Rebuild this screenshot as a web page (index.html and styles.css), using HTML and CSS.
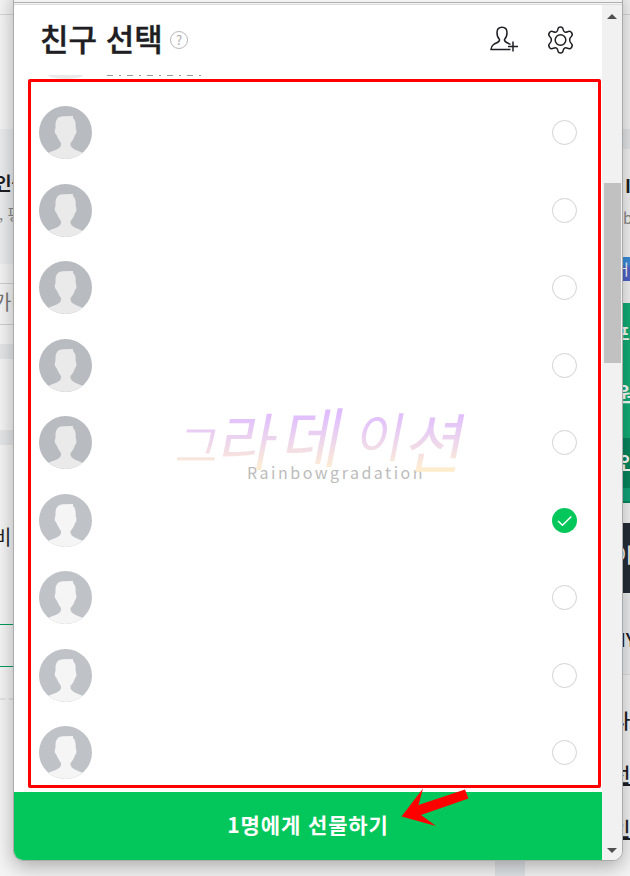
FILE: index.html
```html
<!DOCTYPE html>
<html lang="ko">
<head>
    <meta charset="UTF-8">
    <meta name="viewport" content="width=device-width, initial-scale=1.0">
    <title>친구 선택</title>
    <link rel="stylesheet" href="styles.css">
</head>
<body>
    <svg width="0" height="0" class="defs">
        <symbol id="person" viewBox="0 0 53 53">
            <path d="M9.5 47C14 44.500 21.500 43.500 22 39V37C20 34.500 18.500 31 17.500 29Q14.500 26 16.500 22V18C17 12.500 20 10.500 24 10.300L34 10V12Q37 14 36.700 22Q38.500 27 36 29C35 32 33.500 35 31.500 37V39C32.500 43.500 39 44.500 43.500 47Q36 53 26.500 53Q17 53 9.500 47Z" fill="currentColor"/>
        </symbol>
    </svg>

    <!-- page behind the popup -->
    <div class="page">
        <div class="side left">
            <div class="seg top"></div>
            <div class="seg blank"></div>
            <div class="seg notice">
                <b class="name">인증</b>
                <span class="desc">, 평</span>
            </div>
            <div class="seg gap"></div>
            <div class="seg search">가나</div>
            <div class="seg gap2"></div>
            <div class="seg bar"></div>
            <div class="seg card"></div>
            <div class="seg bar"></div>
            <div class="seg price">비</div>
            <div class="seg green-box"></div>
            <div class="seg dashed"></div>
        </div>
        <div class="side right">
            <div class="seg top"></div>
            <div class="seg blank"></div>
            <div class="seg bar tall"></div>
            <div class="seg info">
                <b class="name">I</b>
                <span class="desc">b</span>
            </div>
            <div class="seg badge">버</div>
            <div class="seg gap3"></div>
            <div class="seg shop">
                <div class="shop-name">포</div>
                <div class="shop-name second">원</div>
            </div>
            <div class="seg shop-dark">인</div>
            <div class="seg shop-end"></div>
            <div class="seg gap4"></div>
            <div class="seg black">이</div>
            <div class="seg my">IY</div>
            <div class="seg links">
                <span>나</span>
                <u>선</u>
                <u>인</u>
            </div>
        </div>
        <div class="page-strip"></div>
    </div>

    <div class="popup">
        <div class="titlebar"></div>
        <div class="popup-body">
            <div class="main">
                <div class="header">
                    <h1>친구 선택</h1>
                    <span class="help">?</span>
                    <svg class="add-icon" width="29" height="27" viewBox="0 0 29 27" fill="none" stroke="#1e1e23" stroke-width="1.500">
                        <path d="M20.500 18.500C17.500 16.500 14 16.500 14.500 13.500C16 12 17 10 17 6.500C17 3 15 1.200 12 1.200S7 3 7 6.500C7 10 8 12 9.500 13.500C10 16.500 6.500 16.500 3.500 18.500C1.500 20 1 21.500 1 23.500H20.500"/>
                        <path d="M18 20.500H28M23 15.500V25.500"/>
                    </svg>
                    <svg class="gear-icon" width="27" height="28" viewBox="0 0 27 28" fill="none" stroke="#1e1e23" stroke-width="1.500">
                        <path d="M11 3Q11.300 1 13.500 1T16 3C16.500 6 18 7 20.500 5.800Q23 4.500 24.500 6.500Q26 9 24.500 10.300C22 12.500 22 15.500 24.500 17.700Q26 19 24.500 21.500Q23 23.500 20.500 22.200C18 21 16.500 22 16 25Q15.700 27 13.500 27T11 25C10.500 22 9 21 6.500 22.200Q4 23.500 2.500 21.500Q1 19 2.500 17.700C5 15.500 5 12.500 2.500 10.300Q1 9 2.500 6.500Q4 4.500 6.500 5.800C9 7 10.500 6 11 3Z"/>
                        <circle cx="13.500" cy="14" r="5.300"/>
                    </svg>
                </div>

                <div class="cut-row">
                    <span class="cut-avatar"></span>
                    <span class="cut-text"></span>
                </div>

                <div class="list">
                    <div class="row"><svg class="avatar"><use href="#person"/></svg><span class="radio"></span></div>
                    <div class="row"><svg class="avatar"><use href="#person"/></svg><span class="radio"></span></div>
                    <div class="row"><svg class="avatar"><use href="#person"/></svg><span class="radio"></span></div>
                    <div class="row"><svg class="avatar"><use href="#person"/></svg><span class="radio"></span></div>
                    <div class="row"><svg class="avatar"><use href="#person"/></svg><span class="radio"></span></div>
                    <div class="row"><svg class="avatar light"><use href="#person"/></svg>
                        <span class="radio checked">
                            <svg width="25" height="25" viewBox="0 0 25 25"><path d="M6 13L10.500 17.300L19.300 8.500" fill="none" stroke="#fff" stroke-width="1.500"/></svg>
                        </span>
                    </div>
                    <div class="row"><svg class="avatar light"><use href="#person"/></svg><span class="radio"></span></div>
                    <div class="row"><svg class="avatar light"><use href="#person"/></svg><span class="radio"></span></div>
                    <div class="row"><svg class="avatar light"><use href="#person"/></svg><span class="radio"></span></div>
                </div>

                <button class="gift-button">1명에게 선물하기</button>
            </div>

            <div class="scrollbar">
                <span class="arrow up"></span>
                <span class="thumb"></span>
                <span class="arrow down"></span>
            </div>
        </div>
    </div>

    <div class="watermark">
        <div class="brand">
            <span class="ch1">그</span>
            <span class="ch2">라</span>
            <span class="ch3">데</span>
            <span class="ch4">이</span>
            <span class="ch5">션</span>
        </div>
        <div class="brand-sub">Rainbowgradation</div>
    </div>

    <svg class="pointer" width="68" height="38" viewBox="0 0 68 38">
        <path d="M0.500 28.500L22 0.500L17.500 17L64 1.500L67.500 10.500L20 27L35 38Z" fill="#f00"/>
    </svg>
</body>
</html>
```

FILE: styles.css
```css
* {
    box-sizing: border-box;
}

body {
    font-family: "Noto Sans CJK KR", "Noto Sans", sans-serif;
    margin: 0;
    width: 630px;
    height: 876px;
    overflow: hidden;
    position: relative;
    background-color: #f5f5f6;
    color: #1e1e23;
}

.defs {
    position: absolute;
}

/* background page */
.page {
    display: flex;
    justify-content: space-between;
    height: 876px;
    position: relative;
}

.side {
    display: flex;
    flex-direction: column;
    height: 876px;
}

.left {
    width: 14px;
}

.right {
    width: 8px;
}

.seg {
    flex: none;
    overflow: hidden;
    white-space: nowrap;
}

.top {
    height: 15px;
    border-bottom: 1px solid #d8d8d8;
}

.blank {
    height: 114px;
}

.bar {
    height: 15px;
    background-color: #e6e7e8;
}

.bar.tall {
    height: 20px;
}

.notice {
    height: 135px;
    background-color: #ebedef;
    padding-top: 42px;
}

.name,
.desc {
    display: block;
    font-size: 18px;
    line-height: 22px;
}

.left .name {
    text-indent: -5px;
    width: 10px;
    border-bottom: 2px solid #1e1e23;
    height: 21px;
}

.desc {
    font-size: 15px;
    margin-top: 11px;
    color: #888;
}

.left .desc {
    text-indent: -1px;
}

.gap {
    height: 19px;
}

.search {
    height: 42px;
    border-top: 1px solid #d0d0d0;
    border-bottom: 1px solid #d0d0d0;
    font-size: 20px;
    line-height: 36px;
    color: #777;
    text-indent: -7px;
}

.gap2 {
    height: 19px;
}

.card {
    height: 71px;
}

.price {
    height: 179px;
    padding-top: 75px;
    font-size: 20px;
    line-height: 34px;
    text-indent: -7px;
}

.green-box {
    height: 43px;
    border-top: 1px solid #009e60;
    border-bottom: 1px solid #009e60;
}

.dashed {
    height: 33px;
    border-bottom: 2px dashed #e4e4e4;
}

.info {
    height: 108px;
    padding-top: 25px;
}

.right .name {
    text-indent: 3px;
}

.right .desc {
    text-indent: 1px;
}

.badge {
    height: 24px;
    background: linear-gradient(#3a8ddc 30%, #4f63c8 45%);
    color: #fff;
    font-size: 15px;
    line-height: 23px;
    text-indent: -7px;
}

.gap3 {
    height: 22px;
}

.gap4 {
    height: 20px;
}

.shop {
    height: 135px;
    background-color: #12ae76;
    color: #fff;
    padding-top: 18px;
    font-size: 17px;
    font-weight: bold;
    line-height: 24px;
    text-indent: -8px;
}

.second {
    margin-top: 37px;
    font-size: 20px;
    text-indent: -5px;
}

.shop-dark {
    height: 50px;
    background-color: #07875f;
    color: #fff;
    font-size: 18px;
    font-weight: bold;
    line-height: 46px;
    text-indent: -3px;
}

.shop-end {
    height: 15px;
    background-color: #12a57a;
    border-bottom: 2px solid #078a5d;
}

.black {
    height: 70px;
    background-color: #262d38;
    color: #fff;
    font-size: 20px;
    line-height: 64px;
    text-indent: -8px;
}

.my {
    height: 81px;
    margin-top: 1px;
    background-color: #eeeff0;
    border-bottom: 1px solid #e0e0e0;
    font-size: 19px;
    font-weight: 500;
    line-height: 90px;
    text-indent: -2px;
}

.links {
    display: flex;
    flex-direction: column;
    gap: 22px;
    padding-top: 30px;
    font-size: 20px;
    font-weight: 500;
    line-height: 32px;
    text-indent: -10px;
}

.page-strip {
    position: absolute;
    left: 495px;
    bottom: 0;
    width: 30px;
    height: 16px;
    background-color: #e2e5e8;
}

/* popup window */
.popup {
    position: absolute;
    left: 13px;
    top: -10px;
    width: 610px;
    height: 871px;
    border: 1px solid #aaa;
    border-radius: 0 0 10px 10px;
    overflow: hidden;
    background-color: #fff;
    box-shadow: 0 6px 20px rgba(0, 0, 0, 0.3);
    display: flex;
    flex-direction: column;
}

.titlebar {
    height: 14px;
    flex: none;
    background-color: #f2f2f2;
    border-bottom: 1px solid #ddd;
    box-shadow: inset 0 -1px #f5f5f5, inset 0 -2px #aeaeae;
}

.popup-body {
    display: flex;
    flex: 1;
}

.main {
    width: 588px;
    display: flex;
    flex-direction: column;
}

.header {
    height: 70px;
    display: flex;
    align-items: center;
    padding: 0 28px 1px 26px;
}

h1 {
    margin: 0;
    padding-bottom: 3px;
    font-size: 31px;
    line-height: 40px;
    font-weight: 500;
    width: 130px;
    white-space: nowrap;
    -webkit-text-stroke: 0.4px #1e1e23;
}

.help {
    width: 18px;
    height: 18px;
    border: 1.5px solid #b8b8b8;
    border-radius: 50%;
    color: #aaa;
    font-size: 13px;
    line-height: 15px;
    text-align: center;
}

.add-icon {
    margin-left: auto;
}

.gear-icon {
    margin-left: 28px;
}

.cut-row {
    height: 4px;
    display: flex;
    padding-left: 34px;
    overflow: hidden;
}

.cut-avatar {
    width: 35px;
    height: 4px;
    background-color: #eaeaea;
    border-radius: 0 0 50% 50% / 0 0 100% 100%;
}

.cut-text {
    width: 94px;
    height: 1px;
    margin-left: 24px;
    background: repeating-linear-gradient(90deg, #999 0 6px, transparent 6px 12px, #999 12px 14px, transparent 14px 20px);
}

.list {
    margin: 0 1px 0 14px;
    height: 709px;
    border: 3px solid #f00;
    border-radius: 2px;
    padding: 12px 21px 0 8px;
    display: flex;
    flex-direction: column;
}

.row {
    height: 77.5px;
    flex: none;
    display: flex;
    align-items: center;
    justify-content: space-between;
}

.avatar {
    width: 53px;
    height: 53px;
    border-radius: 50%;
    background-color: #b8bcc1;
    color: #eaeaea;
}

.avatar.light {
    background-color: #bfc3c8;
    color: #f5f5f5;
}

.radio {
    width: 25px;
    height: 25px;
    border: 1px solid #d2d2d2;
    border-radius: 50%;
}

.radio.checked {
    border: none;
    background-color: #03c75a;
}

.radio svg {
    display: block;
}

.gift-button {
    margin-top: 4px;
    height: 69px;
    border: none;
    padding: 0 0 5px;
    background-color: #03c75a;
    color: #fff;
    font-family: inherit;
    font-size: 21px;
    letter-spacing: 0.9px;
    font-weight: bold;
}

.scrollbar {
    width: 20px;
    background-color: #f1f1f1;
    display: flex;
    flex-direction: column;
    align-items: center;
    padding: 9px 0 8px;
}

.arrow {
    border: 5px solid transparent;
}

.up {
    border-top: none;
    border-bottom-color: #505050;
}

.down {
    border-bottom: none;
    border-top-color: #505050;
    margin-top: auto;
}

.thumb {
    width: 17px;
    height: 180px;
    margin-top: 164px;
    background-color: #c1c1c1;
}

/* overlays */
.watermark {
    position: absolute;
    left: 178px;
    top: 405px;
    width: 300px;
}

.brand {
    display: flex;
    height: 76px;
    font-weight: 400;
    line-height: 66px;
    transform: skewX(-11deg);
    background: linear-gradient(#dfbcff 10%, #ecd4ee 45%, #fcebd6 80%, #fff2b8);
    -webkit-background-clip: text;
    background-clip: text;
    color: transparent;
}

.brand span {
    flex: none;
}

.ch1 {
    width: 42px;
    font-size: 46px;
    padding-top: 5px;
}

.ch2 {
    width: 63px;
    font-size: 62px;
}

.ch3 {
    width: 73px;
    font-size: 65px;
    margin-top: -4px;
}

.ch4 {
    width: 51px;
    font-size: 53px;
    margin-top: -4px;
}

.ch5 {
    width: 66px;
    font-size: 65px;
    padding-top: 2px;
}

.brand-sub {
    margin: -21px 0 0 69px;
    font-size: 16px;
    line-height: 24px;
    letter-spacing: 2.5px;
    color: #bcbcbc;
}

.pointer {
    position: absolute;
    left: 401px;
    top: 788px;
}
```
